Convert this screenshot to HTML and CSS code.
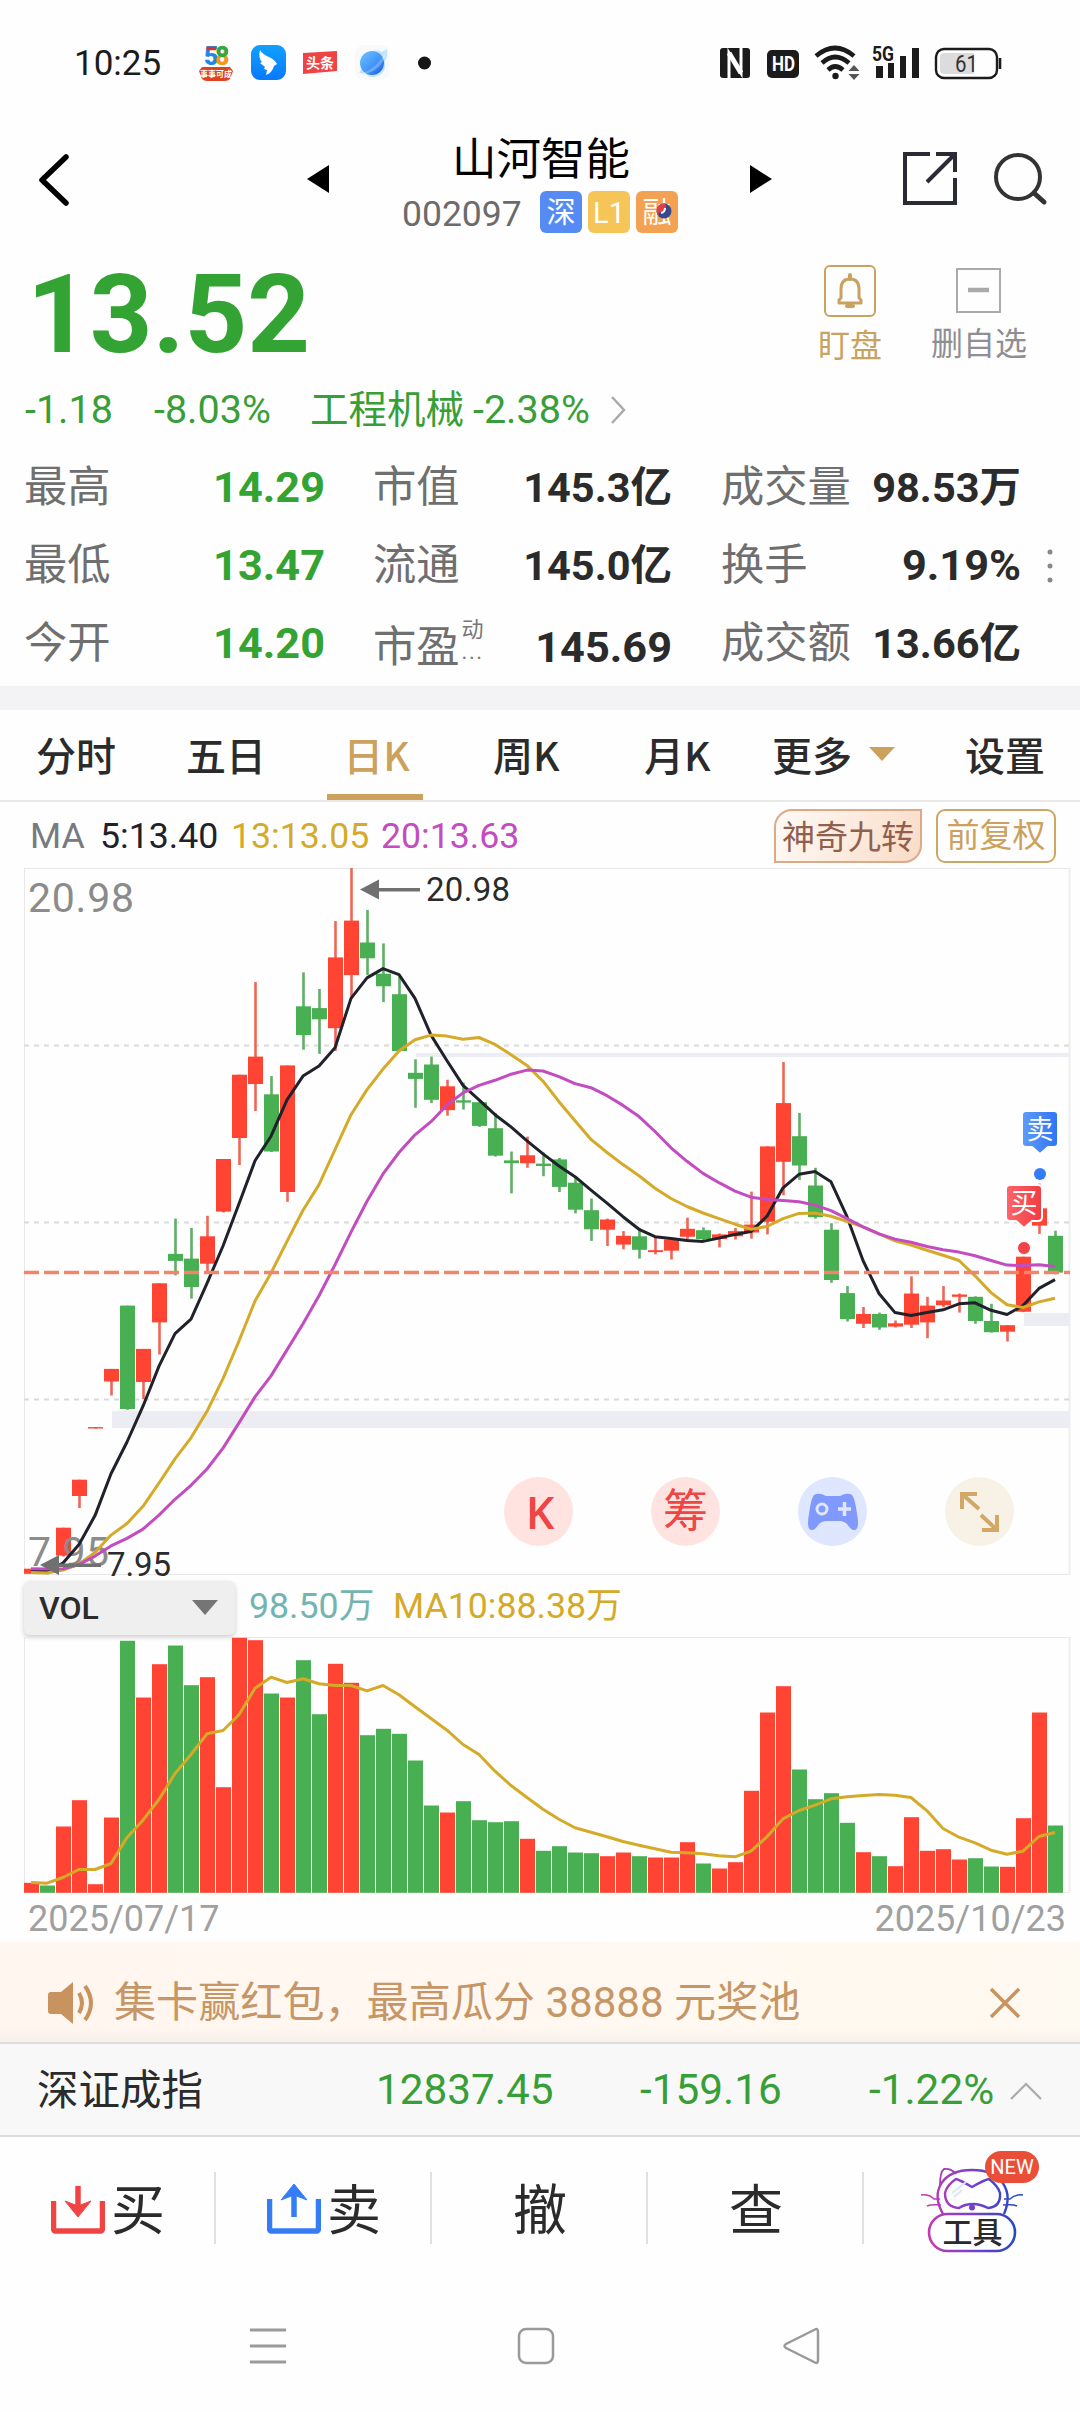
FILE: index.html
```html
<!DOCTYPE html>
<html lang="zh-CN">
<head>
<meta charset="utf-8">
<title>山河智能 002097</title>
<link rel="stylesheet" href="styles.css">
</head>
<body>
<div class="phone">
  <header class="status">
    <span class="clock">10:25</span>
    <svg class="apps" width="240" height="40" viewBox="0 0 240 40">
      <g font-family="Roboto" font-weight="900" font-size="25">
        <text x="6" y="22" fill="#1e88e5">5</text><path d="M8.500 5.500h9.500" stroke="#d9342b" stroke-width="3.500"/>
        <text x="17" y="22" fill="#f29a1f">8</text><circle cx="24.500" cy="8.500" r="4" fill="none" stroke="#2ca84a" stroke-width="3.500"/>
      </g>
      <path d="M4 24h28l3 4-3 8q-2 2-5 2H9q-3 0-5-2l-3-8z" fill="#dd4322"/>
      <text x="2" y="34" font-size="8" font-weight="700" fill="#fff" class="cjk">事事可成</text>
      <defs>
        <linearGradient id="wing" x2="0" y2="1"><stop stop-color="#12a0ff"/><stop offset="1" stop-color="#0879ff"/></linearGradient>
        <linearGradient id="planet" x1="0" x2="1" y2="1"><stop stop-color="#6fc4ff"/><stop offset=".6" stop-color="#3f93f8"/><stop offset="1" stop-color="#1455dd"/></linearGradient>
      </defs>
      <rect x="53" y="2" width="35" height="35" rx="9" fill="url(#wing)"/>
      <path d="M62 7q2 4 9 7q6 3 8 7l-3 2q-2 7-8 9l1-5-3-1 1-2-5-4 2-1q-4-4-2-12z" fill="#fff"/>
      <path d="M105 10l34-2v20l-34 3z" fill="#ef4444"/>
      <text x="108" y="25" font-size="14" font-weight="700" fill="#fff" class="cjk">头条</text>
      <rect x="157" y="2" width="35" height="35" rx="9" fill="#f8f9fb"/>
      <path d="M161 30l5-7q-2-12 8-15q6-2 10 1l5-3q1 8-2 12q2 14-12 16q-5 0-7-3z" fill="#a9dbff" opacity=".7"/>
      <circle cx="174" cy="20" r="12" fill="url(#planet)"/>
      <path d="M163 31q17-6 25-23-2 13-10 18-6 5-15 5z" fill="#fff" opacity=".25"/>
      <circle cx="226.500" cy="20" r="6.500" fill="#161616"/>
    </svg>
    <svg class="signals" width="290" height="40" viewBox="0 0 290 40">
      <path d="M3 5h24q3 0 3 3v24q0 3-3 3h-24q-3 0-3-3v-24q0-3 3-3z" fill="#1b1b1b"/>
      <path d="M9 35V10l12 20V5" fill="none" stroke="#fff" stroke-width="3"/>
      <path d="M9 10l12 20" stroke="#fff" stroke-width="5"/>
      <rect x="47" y="7" width="32" height="28" rx="5" fill="#1b1b1b"/>
      <text x="52" y="28" font-family="Roboto" font-weight="700" font-size="20" textLength="23" lengthAdjust="spacingAndGlyphs" fill="#fff">HD</text>
      <g fill="none" stroke="#1b1b1b" stroke-width="4.600"><path d="M96 13q19-16 38 0"/><path d="M102 20q13-12 27 0"/><path d="M108 27q7-7 15 0"/></g>
      <circle cx="115.500" cy="33" r="3.200" fill="#1b1b1b"/>
      <path d="M128.500 28l5.500-6 5.500 6zM128.500 31l5.500 6 5.500-6z" fill="#555"/>
      <text x="152" y="18" font-family="Roboto" font-weight="700" font-size="20" textLength="22" lengthAdjust="spacingAndGlyphs" fill="#1b1b1b">5G</text>
      <path d="M156 23h7v12h-7zM168 20h6v15h-6zM180 13h6v22h-6zM192 5h7v30h-7z" fill="#1b1b1b"/>
      <rect x="216" y="6" width="61" height="29" rx="8" fill="none" stroke="#1b1b1b" stroke-width="2.400"/>
      <path d="M224 10h30v21h-30q-4 0-4-4v-13q0-4 4-4z" fill="#dcdcdc"/>
      <path d="M280 15v11" stroke="#1b1b1b" stroke-width="2.600"/>
      <text x="235" y="29" font-family="Roboto" font-size="23" textLength="23" lengthAdjust="spacingAndGlyphs" fill="#333">61</text>
    </svg>
  </header>

  <nav class="title-bar">
    <svg width="80" height="60" viewBox="0 0 80 60"><path d="M66 6L42 29l24 23" fill="none" stroke="#000" stroke-width="5.500" stroke-linecap="round" stroke-linejoin="round"/></svg>
    <svg width="22" height="28" viewBox="0 0 22 28"><path d="M22 0v28L0 14z"/></svg>
    <div class="stock">
      <h1>山河智能</h1>
      <div class="code"><span>002097</span><b class="tag blue">深</b><b class="tag yellow">L1</b><b class="tag orange">融
        <svg width="16" height="16" viewBox="0 0 16 16"><circle cx="8" cy="8" r="7.500" fill="#34498f"/><path d="M8 .5a7.500 7.500 0 0 0-5 13q-2-5 5-5.500q4-1 1-7.500z" fill="#e33d45"/><path d="M5 10q4-1 4-5" stroke="#fff" stroke-width="2" fill="none"/></svg></b></div>
    </div>
    <svg width="22" height="28" viewBox="0 0 22 28"><path d="M0 0v28l22-14z"/></svg>
    <svg width="56" height="56" viewBox="0 0 56 56"><path d="M28 3H3v49h50V27M34 3h19v18M53 3L25 31" fill="none" stroke="#2a2b35" stroke-width="4"/></svg>
    <svg width="56" height="56" viewBox="0 0 56 56"><circle cx="25" cy="26" r="22" fill="none" stroke="#333" stroke-width="4"/><path d="M41 42l10 9" stroke="#333" stroke-width="5" stroke-linecap="round"/></svg>
  </nav>

  <section class="quote">
    <strong class="price">13.52</strong>
    <div class="action gold">
      <svg width="52" height="52" viewBox="0 0 52 52"><rect x="1" y="1" width="50" height="50" rx="5" fill="none" stroke="currentColor" stroke-width="2"/><path d="M15 38v-3l2-2V24q0-10 9-10t9 10v9l2 2v3z" fill="none" stroke="currentColor" stroke-width="3" stroke-linejoin="round"/><path d="M26 14v-4M23 41h6" stroke="currentColor" stroke-width="4" stroke-linecap="round"/></svg>
      <span>盯盘</span>
    </div>
    <div class="action gray">
      <svg width="52" height="52" viewBox="0 0 52 52"><rect x="4" y="4" width="43" height="43" fill="none" stroke="#aaa" stroke-width="2"/><path d="M15 25h21" stroke="#aaa" stroke-width="4.500"/></svg>
      <span>删自选</span>
    </div>
  </section>

  <div class="change">
    <span>-1.18</span><span>-8.03%</span><span class="sector">工程机械</span><span>-2.38%</span>
    <svg width="18" height="30" viewBox="0 0 18 30"><path d="M2 2l12 13L2 28" fill="none" stroke="#aaa" stroke-width="2.500"/></svg>
  </div>

  <section class="stats">
    <div class="stat down"><span>最高</span><b>14.29</b></div>
    <div class="stat"><span>市值</span><b class="unit">145.3亿</b></div>
    <div class="stat"><span>成交量</span><b class="unit">98.53万</b></div>
    <i></i>
    <div class="stat down"><span>最低</span><b>13.47</b></div>
    <div class="stat"><span>流通</span><b class="unit">145.0亿</b></div>
    <div class="stat"><span>换手</span><b>9.19%</b></div>
    <svg class="more-dots" width="6" height="34" viewBox="0 0 6 34"><g fill="#888"><circle cx="3" cy="3" r="2.500"/><circle cx="3" cy="17" r="2.500"/><circle cx="3" cy="31" r="2.500"/></g></svg>
    <div class="stat down"><span>今开</span><b>14.20</b></div>
    <div class="stat pe"><span>市盈</span><small>动<br><i>...</i></small><b>145.69</b></div>
    <div class="stat"><span>成交额</span><b class="unit">13.66亿</b></div>
  </section>

  <nav class="tabs">
    <span>分时</span><span>五日</span><span class="active">日K</span><span>周K</span><span>月K</span>
    <span>更多<svg width="26" height="14" viewBox="0 0 26 14"><path d="M0 0h26L13 14z" fill="#cba15d"/></svg></span><span>设置</span>
  </nav>

  <div class="ma-row">
    <span class="ma">MA</span><span class="ma5">5:13.40</span><span class="ma13">13:13.05</span><span class="ma20">20:13.63</span>
    <span class="chip magic">神奇九转</span><span class="chip adjust">前复权</span>
  </div>

  <section class="price-chart">
    <svg id="kline" width="1080" height="712" viewBox="0 0 1080 712"></svg>
    <div class="tools">
      <span class="round red">K</span>
      <span class="round red">筹</span>
      <span class="round indigo"><svg width="52" height="38" viewBox="0 0 52 38"><path d="M7 2Q12-1 19 3h14Q40-1 45 2q3 3 5 19q3 16-3 16q-3 0-7-6q-2-2-6-3H18q-4 1-6 3q-4 6-7 6q-6 0-3-16Q4 5 7 2z" fill="#8099ff"/><circle cx="15" cy="16" r="5" fill="none" stroke="#e0e7ff" stroke-width="3"/><path d="M31 16h13M37.500 9v14" stroke="#e0e7ff" stroke-width="3.500"/></svg></span>
      <span class="round sand"><svg width="44" height="42" viewBox="0 0 44 42"><path d="M4 18V3h15M4 3l17 15M39 24v15H24M39 39L23 24" fill="none" stroke="#d3a766" stroke-width="4"/></svg></span>
    </div>
  </section>

  <div class="vol-row">
    <span class="select">VOL<svg width="26" height="15" viewBox="0 0 26 15"><path d="M0 0h26L13 15z" fill="#757575"/></svg></span>
    <span class="vol">98.50万</span><span class="vma">MA10:88.38万</span>
  </div>
  <svg id="volume" class="volume" width="1080" height="258" viewBox="0 0 1080 258"></svg>
  <div class="dates"><span>2025/07/17</span><span>2025/10/23</span></div>

  <div class="banner">
    <svg width="50" height="44" viewBox="0 0 50 44"><path d="M3 11h10L25 1v42L13 33H3q-3 0-3-3V14q0-3 3-3z" fill="#c9935f"/><path d="M31 12q6 10 0 20M37 5q12 17 0 34" fill="none" stroke="#c9935f" stroke-width="4"/></svg>
    <span>集卡赢红包，最高瓜分 38888 元奖池</span>
    <svg width="32" height="32" viewBox="0 0 32 32"><path d="M2 2l28 28M30 2L2 30" stroke="#c9935f" stroke-width="3.500"/></svg>
  </div>

  <div class="index-bar">
    <span>深证成指</span><span>12837.45</span><span>-159.16</span><span>-1.22%</span>
    <svg width="34" height="20" viewBox="0 0 34 20"><path d="M2 18L17 3l15 15" fill="none" stroke="#aaa" stroke-width="2.200"/></svg>
  </div>

  <nav class="trade">
    <span><svg width="54" height="52" viewBox="0 0 54 52"><path d="M2.500 18v27q0 3 3 3h43q3 0 3-3V18" fill="none" stroke="#f04444" stroke-width="5.500"/><path d="M27 3v23" stroke="#f04444" stroke-width="5.500"/><path d="M14 18l13 5 13-5-13 16z" fill="#f04444" stroke="#f04444" stroke-linejoin="round"/></svg>买</span>
    <span><svg width="54" height="52" viewBox="0 0 54 52"><path d="M2.500 16v29q0 3 3 3h43q3 0 3-3V16" fill="none" stroke="#347df5" stroke-width="5.500"/><path d="M27 34V10" stroke="#347df5" stroke-width="5.500"/><path d="M14 17L27 1l13 16-13-5z" fill="#347df5" stroke="#347df5" stroke-linejoin="round"/></svg>卖</span>
    <span>撤</span>
    <span>查</span>
    <span class="toolbox">
      <svg width="120" height="100" viewBox="0 0 120 100">
        <defs><linearGradient id="cat" gradientUnits="userSpaceOnUse" x1="16" x2="102" y1="50" y2="50"><stop stop-color="#c03cae"/><stop offset=".5" stop-color="#7440d0"/><stop offset="1" stop-color="#2448c4"/></linearGradient></defs>
        <g fill="none" stroke="url(#cat)" stroke-width="2.400">
          <path d="M29 59C16 36 28 15 58 15s42 21 32 44"/>
          <path d="M26 30Q26 17 30 14q7-1 12 5M89 29V24q0-7-3-10-7-1-12 5" stroke-width="1.800"/>
          <path d="M31 38q2-8 11-14q4 1 16 8q12-7 17-8q9 7 11 14q1 14-12 15q-8-4-15-4q-8 0-14 4Q31 52 31 38z"/>
          <path d="M7 40q8-1 13 4h6M13 51q4-2 14-1M109 40q-8-1-13 4h-6M103 51q-4-2-14-1" stroke-width="1.500"/>
          <rect x="15" y="59" width="86" height="37" rx="18.500" fill="#fff" stroke-width="2.600"/>
        </g>
        <circle cx="58" cy="52.500" r="3" fill="#7540ca"/>
        <path d="M38 38l14-11M40 42l8-7" stroke="#dfe5fb" stroke-width="2"/>
        <text x="58.500" y="88" text-anchor="middle" class="cjk" font-size="30" font-weight="500" fill="#2b2b2b">工具</text>
      </svg>
      <em>NEW</em>
    </span>
  </nav>

  <footer class="sys-nav">
    <svg width="40" height="40" viewBox="0 0 40 40"><path d="M2 4h36M2 20h36M2 36h36" stroke="#9a9a9a" stroke-width="3"/></svg>
    <svg width="40" height="40" viewBox="0 0 40 40"><rect x="3" y="3" width="34" height="34" rx="7" fill="none" stroke="#9a9a9a" stroke-width="2.500"/></svg>
    <svg width="40" height="40" viewBox="0 0 40 40"><path d="M33 3.500Q36 2 36 6v28q0 4-3 2.500L4 22q-3-2 0-4z" fill="none" stroke="#9a9a9a" stroke-width="2.500"/></svg>
  </footer>
</div>
<script src="chart.js"></script>
</body>
</html>
```
FILE: styles.css
```css
* { box-sizing: border-box; }
body { margin: 0; background: #fff; }
svg { display: block; flex: none; }
.phone { width: 1080px; height: 2412px; overflow: hidden; background: #fefefe; font-family: Roboto, "Noto Sans CJK SC", sans-serif; color: #2b2b2b; line-height: 1; white-space: nowrap; }
.cjk { font-family: "Noto Sans CJK SC", sans-serif; }

.status { height: 124px; display: flex; align-items: center; padding: 0 0 0 74px; }
.clock { font-size: 35px; width: 124px; color: #1b1b1b; margin-top: 2px; }
.apps { margin-top: 2px; }
.signals { margin-left: 282px; margin-top: 2px; }

.title-bar { height: 126px; display: grid; grid-template-columns: 307px 96px 347px 152px 91px 1fr; align-items: start; }
.title-bar > svg { margin-top: 27px; }
.title-bar > svg:nth-child(2), .title-bar > svg:nth-child(4) { margin-top: 41px; }
.stock { display: flex; flex-direction: column; }
h1 { margin: 13px 0 0 49px; font-size: 44.500px; line-height: 46px; font-weight: 400; color: #000; }
.code { display: flex; align-items: center; margin-top: 8px; font-size: 35.500px; color: #6b6b6b; }
.code span { width: 137px; margin: 5px 0 0 -1px; padding-right: 1px; flex: none; }
.code .blue { margin-left: 1px; }
.tag { position: relative; width: 42px; height: 42px; margin-right: 6px; border-radius: 6px; color: #fff; font-size: 29px; font-weight: 400; line-height: 44px; text-align: center; }
.tag svg { position: absolute; left: 20px; top: 12px; }
.blue { background: #558bf3; }
.yellow { background: #f5c557; }
.orange { background: #f3a251; }

.quote { height: 118px; display: grid; grid-template-columns: 799px 102px 156px; }
.price { margin: 10px 0 0 27px; font-size: 109.500px; font-weight: 700; color: #33a333; }
.action { display: flex; flex-direction: column; align-items: center; padding-top: 15px; font-size: 32px; }
.action span { margin-top: 13px; }
.gold { color: #caa25f; }
.gray { color: #8e8e93; }
.gray span { margin-top: 11px; }

.change { height: 81px; display: grid; grid-template-columns: 129px 156px 163px 137px auto; align-items: center; justify-content: start; padding: 3px 0 0 25px; font-size: 39.500px; color: #389f38; }
.sector { font-size: 38.500px; }

.stats { height: 237px; padding: 0 0 4px 24px; display: grid; grid-template-columns: 349px 348px 324px 6px; grid-auto-rows: 78px; align-items: center; justify-content: start; }
.stat { display: flex; align-items: center; justify-content: space-between; width: 301px; font-size: 43.300px; }
.stat:nth-child(4n+2) { width: 299px; }
.stat:nth-child(4n+3) { width: 300px; }
.stat span { color: #6f6f6f; }
.stat b { font-weight: 700; }
.stat .unit { font-size: 41.500px; }
.down b { color: #33a333; }
.pe { padding-top: 7px; }
.pe small { flex: 1; margin: -12px 0 0 2px; font-size: 22px; color: #777; line-height: 22px; }
.pe small i { font-style: normal; letter-spacing: 1.500px; }
.more-dots { margin-left: 2px; }

.tabs { height: 116px; padding-left: 36px; display: grid; grid-template-columns: 150px 160px 147px 151px 128px 193px 1fr; align-items: center; border-top: 24px solid #f3f3f6; border-bottom: 2px solid #e8e8e8; font-size: 40px; font-weight: 500; font-family: "Noto Sans CJK SC", sans-serif; }
.tabs span { display: flex; align-items: center; height: 90px; padding-bottom: 2px; }
.tabs span svg { margin-left: 17px; }
.tabs .active { color: #cba15d; box-shadow: inset 0 -6px #cba15d; width: 96px; margin-left: -19px; padding-left: 3px; justify-content: center; }

.ma-row { height: 66px; display: grid; grid-template-columns: 70px 131px 150px 393px 162px 120px; align-items: center; padding: 4px 0 0 30px; font-size: 35.700px; color: #777a80; }
.ma5 { color: #20222b; }
.ma13 { color: #d4aa28; }
.ma20 { color: #c24cc0; }
.chip { height: 54px; margin-top: -3px; line-height: 50px; text-align: center; border: 2px solid #cda865; font-size: 33px; }
.magic { width: 148px; border-color: #dcaa89; border-radius: 18px 0 18px 0; background: linear-gradient(110deg, #fffaf6, #f9dcc7); color: #925f4e; line-height: 54px; }
.adjust { color: #cba15d; border-radius: 9px; }

.price-chart { position: relative; height: 712px; }
.tools { position: absolute; left: 504px; top: 609px; display: flex; gap: 78px; }
.round { width: 69px; height: 69px; border-radius: 50%; display: flex; align-items: center; justify-content: center; font-size: 45px; }
.red { background: #ffe3e1; color: #ee4545; }
.red:first-child { padding: 0 0 1px 3px; font: 600 45px "Open Sans", sans-serif; }
.indigo { background: #dfe6ff; }
.sand { background: #f8f2e6; }

.vol-row { height: 57px; display: grid; grid-template-columns: 225px 144px auto; justify-content: start; align-items: center; padding-left: 24px; font-size: 35.700px; }
.select { width: 211px; height: 54px; padding: 0 17px 0 15px; display: flex; align-items: center; justify-content: space-between; background: #efefef; border-radius: 6px; box-shadow: 0 2px 5px #ccc; font-size: 32px; font-weight: 500; margin-top: -2px; }
.vol { color: #72b5b0; }
.vma { color: #d4aa28; }
.vol, .vma { margin-top: -3px; }
.dates { height: 47px; padding: 6px 14px 0 28px; display: flex; justify-content: space-between; font-size: 36px; color: #a0a0a0; }

.banner { height: 100px; padding: 22px 0 0 48px; display: grid; grid-template-columns: 66px 875px 32px; align-items: center; background: linear-gradient(0deg, #f6f0e8, transparent 14px), linear-gradient(90deg, #fff6ef, #fffaf1); color: #c69667; font-size: 42.100px; }
.index-bar { height: 95px; padding: 2px 0 0 37px; display: grid; grid-template-columns: 339px 264px 229px 140px 34px; align-items: center; background: #f8f8f8; border: solid #ddd; border-width: 2px 0; font-size: 42.300px; color: #389f38; }
.index-bar span:first-child { font-size: 41.500px; color: #2b2b2b; }
.trade { height: 144px; display: grid; grid-template-columns: repeat(5, 216px); padding-top: 35px; font-size: 54px; }
.trade > span { position: relative; height: 72px; display: flex; align-items: center; justify-content: center; gap: 6px; padding: 8px 0 0 2px; border-right: 2px solid #e1e1e1; }
.trade > span svg { margin-top: -6px; }
.trade > .toolbox { border: 0; }
.trade > .toolbox svg { position: absolute; left: 50px; top: -11px; }
.toolbox em { position: absolute; left: 121px; top: -21px; width: 54px; height: 32px; border-radius: 16px; background: #eb4e38; color: #fff; font-size: 20px; line-height: 33px; font-style: normal; text-align: center; }
.sys-nav { padding: 45px 0 0 248px; display: grid; grid-template-columns: 268px 266px 40px; }
```
FILE: chart.js
```js
// One entry per trading day: direction, high, body top, body bottom, low, volume top.
const days = `
r 1522 1522 1533 1533 938|g 1527 1527 1531 1534 946|r 1434 1434 1494 1496 769|r 1331 1331 1366 1392 690
r 1218 1218 1221 1221 942|r 1093 1093 1120 1150 742|g 957 957 1179 1181 212|r 1050 1050 1121 1158 382
r 909 909 993 1062 282|g 770 846 861 892 226|g 790 856 917 942 345|r 764 808 867 884 321
r 642 642 755 757 651|r 461 461 597 655 203|r 262 422 481 539 210|g 464 503 626 627 370
r 441 441 713 734 382|g 241 314 376 407 270|g 277 318 342 416 432|r 131 209 361 410 281
r 17 130 247 297 338|g 107 177 211 247 495|g 179 244 271 305 476|g 250 288 410 411 491
g 428 457 470 532 571|g 422 439 515 522 706|r 472 486 537 549 727|g 478 516 521 536 693
g 519 520 571 573 750|g 543 576 635 637 756|g 626 645 651 716 753|r 594 634 651 661 806
g 628 652 657 679 842|g 640 643 702 713 828|g 679 693 751 759 847|g 727 752 793 818 849
r 770 772 794 829 858|r 797 807 826 836 847|g 790 808 837 856 858|r 810 838 842 847 862
r 812 815 839 858 862|r 768 792 809 819 816|g 789 795 814 817 880|r 802 804 814 832 895
r 790 797 808 815 876|r 712 783 800 813 662|r 615 615 777 804 427|r 434 522 648 720 348
g 543 593 656 687 598|g 661 699 767 770 687|g 780 794 902 908 669|g 915 930 986 991 758
r 960 975 996 1005 846|g 972 975 1004 1009 858|r 989 995 1002 1004 888|r 894 931 998 1005 741
r 938 957 993 1027 842|r 915 946 956 960 837|r 931 933 938 972 868|g 937 938 990 996 864
g 953 990 1014 1015 889|r 999 999 1013 1034 890|r 852 852 970 971 744|r 695 748 785 803 427
g 796 807 886 890 766`.trim().split(/[|\n]/).map(s => s.split(' '));

const ma5 = [1528,1527,1510,1470,1408,1318,1250,1173,1087,1017,986,909,829,738,646,593,515,464,442,403,297,253,233,246,297,376,431,484,515,547,573,603,631,657,680,709,737,766,793,809,813,817,819,812,804,798,765,704,675,669,691,766,860,931,972,978,972,966,953,951,967,976,957,920,901];
const ma13 = [1530,1531,1525,1512,1487,1450,1425,1388,1338,1286,1241,1184,1114,1033,947,887,819,752,697,622,547,493,449,410,386,376,378,385,381,396,418,441,475,519,560,600,628,654,678,705,727,744,758,770,782,793,787,770,759,758,765,776,788,803,818,827,838,849,860,893,929,955,961,949,941];
const ma20 = [1522,1523,1522,1513,1495,1473,1457,1437,1407,1373,1343,1308,1263,1209,1153,1108,1052,996,936,869,799,733,674,628,590,562,526,500,484,473,460,451,453,465,480,489,506,527,551,583,618,647,673,693,711,724,729,731,734,741,753,770,788,803,814,821,830,837,842,850,860,870,871,869,873];
const volMa = [937,939,922,898,898,880,802,750,688,610,553,491,481,434,354,321,337,326,341,346,346,362,346,374,410,445,480,523,553,603,646,682,717,747,773,786,800,814,825,836,846,848,851,857,860,843,800,746,721,705,686,680,676,673,675,682,722,775,801,818,840,852,843,799,787];

const RED = '#ff4433', GREEN = '#49af53', STEP = 16, LEFT = 24;
const py = v => +((v - 17) * 0.46556).toFixed(1);
const vy = v => +((v - 202) / 3 + 0.5).toFixed(1);
const rect = (x, y, w, h, fill, extra = '') => `<rect x="${x}" y="${y}" width="${w}" height="${h}" fill="${fill}" ${extra}/>`;
const line = (data, y, color) => `<polyline points="${data.map((v, i) => `${LEFT + 7 + i * STEP},${y(v)}`).join(' ')}" fill="none" stroke="${color}" stroke-width="3" stroke-linejoin="round"/>`;
const marker = (x, y, id, label) => `<path d="M${x - 14} ${y}h28q4 0 4 4v28q0 4-4 4h-6l-8 7-8-7h-6q-4 0-4-4v-28q0-4 4-4z" fill="url(#${id})" stroke="#fff" stroke-width="2"/>
  <text x="${x}" y="${y + 28}" font-size="27" text-anchor="middle" fill="#fff">${label}</text>`;
const label = (x, y, size, color, value, width) => `<text x="${x}" y="${y}" font-size="${size}" fill="${color}" textLength="${width}">${value}</text>`;

let k = `<defs>
  <linearGradient id="sell"><stop stop-color="#5f9bfa"/><stop offset="1" stop-color="#2f75f3"/></linearGradient>
  <linearGradient id="buy"><stop stop-color="#ff6569"/><stop offset="1" stop-color="#f03c43"/></linearGradient></defs>`;
k += rect(24.5, 0.5, 1045, 706, 'none', 'stroke="#e8e8e8"') + rect(1068.5, 0, 2, 707, '#ededf0');
[177.5, 354.5, 531.5].forEach(y => { k += `<path d="M24 ${y}H1069" stroke="#dadada" stroke-width="2" stroke-dasharray="5 5"/>`; });
k += rect(112, 543, 958, 17, '#ecedf2') + rect(416, 185, 654, 4, '#ecedf2') + rect(1024, 445, 46, 13, '#ecedf2');
days.forEach(([dir, hi, top, bottom, lo], i) => {
  const color = dir === 'r' ? RED : GREEN, x = LEFT + i * STEP;
  k += rect(x + 6.2, py(hi), 2.6, py(lo) - py(hi), dir === 'r' ? '#ef6658' : '#5faf67');
  k += rect(x, py(top), 15, Math.max(1.4, py(bottom) - py(top)), color);
});
k += label(28, 44, 41, '#8b8b8b', '20.98', 106) + label(28, 698, 41, '#8b8b8b', '7.95', 81);
k += line(ma5, py, '#20222b') + line(ma13, py, '#d4aa28') + line(ma20, py, '#c24cc0');
k += '<path d="M24 404.500H1070" stroke="#f3846c" stroke-width="3.400" stroke-dasharray="15 5"/>';
k += '<g fill="#707070"><path d="M360 21.500l19-10v8.500h41v3.500h-41v8z"/><path d="M40 697l19-10v8.500h42v3.500h-42v8z"/></g>';
k += label(426, 33, 33, '#2b2b2b', '20.98', 84) + label(107, 708, 33, '#2b2b2b', '7.95', 64);
k += marker(1040, 243, 'sell', '卖') + '<circle cx="1040" cy="306" r="6" fill="#347df5"/>';
k += marker(1024, 317, 'buy', '买') + '<circle cx="1024" cy="380" r="6.500" fill="#f24348" stroke="#fff"/>';
document.getElementById('kline').innerHTML = k;

let v = rect(24.5, 0.5, 1045, 255, 'none', 'stroke="#e8e8e8"') + rect(1068.5, 0, 2, 256, '#ededf0');
days.forEach(([dir, , , , , top], i) => {
  v += rect(LEFT + i * STEP, vy(top), 15, +(vy(968) - vy(top)).toFixed(1), dir === 'r' ? RED : GREEN);
});
v += line(volMa, vy, '#d4aa28');
document.getElementById('volume').innerHTML = v;
```
